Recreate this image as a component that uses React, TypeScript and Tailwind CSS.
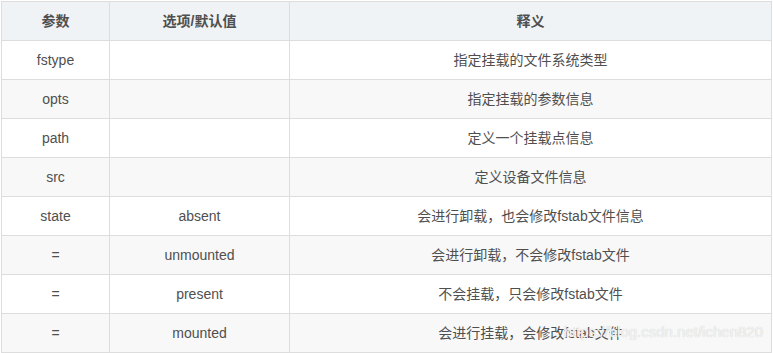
import React from "react";

const rows: [string, string, string][] = [
  ["fstype", "", "指定挂载的文件系统类型"],
  ["opts", "", "指定挂载的参数信息"],
  ["path", "", "定义一个挂载点信息"],
  ["src", "", "定义设备文件信息"],
  ["state", "absent", "会进行卸载，也会修改fstab文件信息"],
  ["=", "unmounted", "会进行卸载，不会修改fstab文件"],
  ["=", "present", "不会挂载，只会修改fstab文件"],
  ["=", "mounted", "会进行挂载，会修改fstab文件"],
];

export default function App() {
  return (
    <div
      className="relative w-[773px] h-[353px] bg-white pl-px pt-px overflow-hidden"
      style={{ fontFamily: '"Liberation Sans", "Noto Sans CJK SC", sans-serif' }}
    >
      <table className="border-collapse w-[771px] text-[14px] text-[#4f4f4f] table-fixed">
        <colgroup>
          <col className="w-[108px]" />
          <col className="w-[180px]" />
          <col />
        </colgroup>
        <thead>
          <tr className="h-[39px] bg-[#eff3f5]">
            <th className="border border-[#dddddd] font-bold text-center">参数</th>
            <th className="border border-[#dddddd] font-bold text-center">选项/默认值</th>
            <th className="border border-[#dddddd] font-bold text-center">释义</th>
          </tr>
        </thead>
        <tbody>
          {rows.map((r, i) => (
            <tr key={i} className={`h-[39px] ${i % 2 === 1 ? "bg-[#f8f8f8]" : "bg-white"}`}>
              <td className="border border-[#dddddd] text-center">{r[0]}</td>
              <td className="border border-[#dddddd] text-center">{r[1]}</td>
              <td className="border border-[#dddddd] text-center">{r[2]}</td>
            </tr>
          ))}
        </tbody>
      </table>
      <div
        className="absolute right-[10px] top-[322px] whitespace-nowrap text-[15px] leading-[20px] text-[#f2f2f2] pointer-events-none"
        style={{ textShadow: "0 0 1px #c8c8c8" }}
      >
        https://blog.csdn.net/ichen820
      </div>
    </div>
  );
}
